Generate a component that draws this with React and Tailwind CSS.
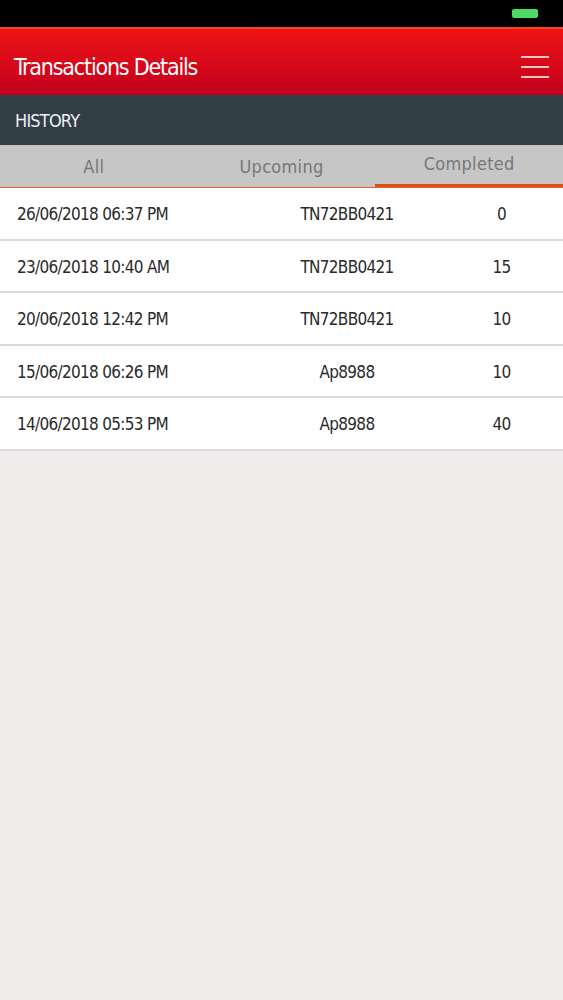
import React from 'react';

const rows = [
  { date: '26/06/2018 06:37 PM', vehicle: 'TN72BB0421', amount: '0' },
  { date: '23/06/2018 10:40 AM', vehicle: 'TN72BB0421', amount: '15' },
  { date: '20/06/2018 12:42 PM', vehicle: 'TN72BB0421', amount: '10' },
  { date: '15/06/2018 06:26 PM', vehicle: 'Ap8988', amount: '10' },
  { date: '14/06/2018 05:53 PM', vehicle: 'Ap8988', amount: '40' },
];

const tabs = ['All', 'Upcoming', 'Completed'];

const App = () => {
  return (
    <div className="min-h-[1000px] w-full bg-[#f0ecec] font-['DejaVu_Sans_Condensed','DejaVu_Sans',sans-serif]">
      {/* status bar */}
      <div className="h-[27px] bg-black flex items-center justify-end pr-[25px]">
        <div className="w-[26px] h-[9px] rounded-[2px] bg-[#4cd964]" />
      </div>

      {/* header */}
      <header className="h-[68px] border-t-2 border-[#f2461c] bg-gradient-to-b from-[#ef1313] to-[#c1001d] flex items-center justify-between pl-[14px] pr-[14px] pt-[10px]">
        <h1 className="text-[23px] tracking-[-1.2px] text-white leading-none">Transactions Details</h1>
        <div className="flex flex-col gap-[8.5px] w-[28px]">
          <span className="h-[1.5px] bg-[#f7c4c4]" />
          <span className="h-[1.5px] bg-[#f7c4c4]" />
          <span className="h-[1.5px] bg-[#f7c4c4]" />
        </div>
      </header>

      <div className="h-[50px] bg-[#313e45] flex items-center pl-[15px]">
        <span className="text-[18px] tracking-[-0.8px] text-[#eef0f0]">HISTORY</span>
      </div>

      {/* tabs */}
      <div className="grid grid-cols-3 h-[43px] bg-[#c6c6c6] border-b border-[#e0602e]">
        {tabs.map((tab) => (
          <div
            key={tab}
            className={`flex items-center justify-center text-[18px] tracking-[0.3px] text-[#777777] ${
              tab === 'Completed' ? 'border-b-[3px] border-[#de4f1d] pb-[3px]' : 'pt-[1px]'
            }`}
          >
            {tab}
          </div>
        ))}
      </div>

      {/* list */}
      <div className="bg-white">
        {rows.map((row, i) => (
          <div
            key={i}
            className="h-[52.6px] grid grid-cols-[251px_192px_1fr] items-center pt-[3px] border-b-2 border-[#dadada] text-[17px] tracking-[-0.7px] text-[#2a2a2a]"
          >
            <span className="pl-[17px]">{row.date}</span>
            <span className="text-center">{row.vehicle}</span>
            <span className="text-center pr-[3px]">{row.amount}</span>
          </div>
        ))}
      </div>
    </div>
  );
};

export default App;
